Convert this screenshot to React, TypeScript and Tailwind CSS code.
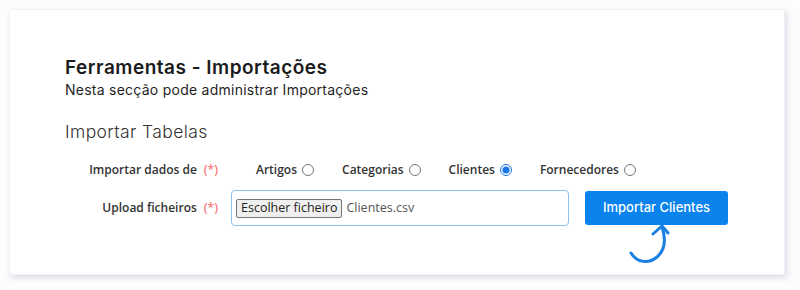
import React from 'react';

const options = [
  { label: 'Artigos', checked: false },
  { label: 'Categorias', checked: false },
  { label: 'Clientes', checked: true },
  { label: 'Fornecedores', checked: false },
];

const Required = () => <span className="ml-[7px] text-[#f87a7a]">(*)</span>;

const App = () => {
  return (
    <div className="w-[800px] h-[290px] bg-[#fdfdfd] p-[9px]">
      <div className="w-[776px] h-[266px] bg-white border border-[#f1f2f5] shadow-[2px_3px_6px_rgba(170,175,200,0.4)] pl-[55px] pt-[45px] font-['Inter',sans-serif]">
        <h1 className="text-[19px] leading-[26px] font-semibold tracking-[0.5px] text-[#1b1b1b]">Ferramentas - Importações</h1>
        <p className="text-[14px] leading-[18px] tracking-[0.25px] text-[#1f1f1f]">Nesta secção pode administrar Importações</p>
        <h2 className="mt-[21px] text-[17.5px] leading-[24px] font-light tracking-[0.4px] text-[#333]">Importar Tabelas</h2>

        <div className="mt-[14px] flex items-center h-[24px] font-['Open_Sans',sans-serif] text-[12px] font-semibold text-[#333]">
          <div className="w-[153px] text-right">
            Importar dados de<Required />
          </div>
          <div className="ml-[38px] flex items-center gap-[28px]">
            {options.map(o => (
              <label key={o.label} className="flex items-center gap-[5px]">
                {o.label}
                <input
                  type="radio"
                  name="tabela"
                  defaultChecked={o.checked}
                  className="m-0 w-[12px] h-[12px] accent-[#1a73e8]"
                />
              </label>
            ))}
          </div>
        </div>

        <div className="mt-[8px] flex items-center font-['Open_Sans',sans-serif] text-[12px]">
          <div className="w-[153px] text-right font-semibold text-[#333]">
            Upload ficheiros<Required />
          </div>
          <div className="ml-[13px] w-[338px] h-[36px] flex items-center gap-[4px] border border-[#8ec0f0] rounded-[4px] px-[4px]">
            <span className="h-[19px] px-[4px] flex items-center border border-[#767676] bg-[#efefef] rounded-[2px] text-[12.5px] text-[#222]">
              Escolher ficheiro
            </span>
            <span className="text-[12.5px] text-[#555]">Clientes.csv</span>
          </div>
          <div className="ml-[16px] relative">
            <button className="w-[143px] h-[34px] bg-[#0a83ed] rounded-[3px] text-white text-[13px] font-medium font-['Inter',sans-serif]">
              Importar Clientes
            </button>
            <svg className="absolute left-[42px] top-[34px]" width="46" height="42" viewBox="0 0 46 42" fill="none">
              <path d="M4 28 C10 38 22 39 30 32 C38 25 39 14 35 2" stroke="#1a7fe2" strokeWidth="3" strokeLinecap="round" />
              <path d="M26 9 L35 1 L41 8" stroke="#1a7fe2" strokeWidth="3" strokeLinecap="round" strokeLinejoin="round" />
            </svg>
          </div>
        </div>
      </div>
    </div>
  );
};

export default App;
